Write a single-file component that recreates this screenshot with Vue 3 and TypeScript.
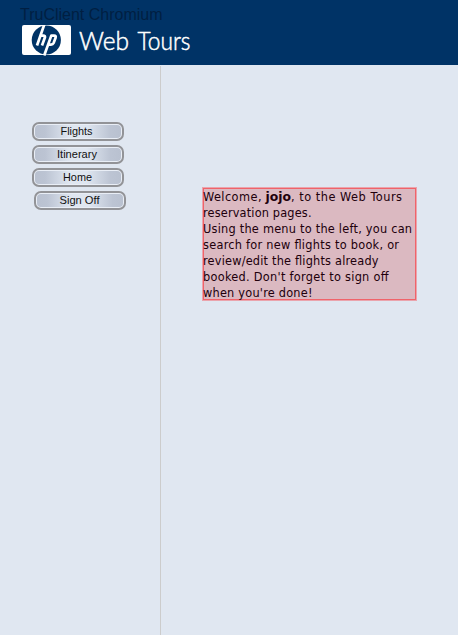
<script setup lang="ts">
interface MenuItem { label: string; x: number; width: number; shifted?: boolean }
interface Line { text: string; width: number }

const menu: MenuItem[] = [
  { label: 'Flights', x: 28.5, width: 32 },
  { label: 'Itinerary', x: 29, width: 40 },
  { label: 'Home', x: 29.5, width: 29 },
  { label: 'Sign Off', x: 29.5, width: 40, shifted: true },
]
const lines: Line[] = [
  { text: 'reservation pages.', width: 108.5 },
  { text: 'Using the menu to the left, you can', width: 209 },
  { text: 'search for new flights to book, or', width: 196 },
  { text: 'review/edit the flights already', width: 175.5 },
  { text: "booked. Don't forget to sign off", width: 185.5 },
  { text: "when you're done!", width: 109.5 },
]
</script>

<template>
  <div class="page">
    <header class="banner">
      <div class="caption">TruClient Chromium</div>
      <svg class="brand" width="174" height="32" viewBox="0 0 174 32">
        <rect x="0" y="0" width="49" height="30" rx="2" fill="#fff" />
        <circle cx="24.3" cy="15" r="14.6" fill="#003366" />
        <g fill="none" stroke="#fff" stroke-width="2.7" stroke-linejoin="round">
          <path d="M22.3 -0.5L15 20.5M18 10.6H21.2Q23.5 10.6 22.8 12.8L20 20.5" />
          <path d="M22.2 30.5L29.3 10.6H32Q34.3 10.6 33.6 12.8L31.6 18Q30.9 19.6 29 19.6H26.6" />
        </g>
        <g class="wordmark">
          <text x="57" y="25" textLength="50" lengthAdjust="spacingAndGlyphs">Web</text>
          <text x="115.5" y="25" textLength="53" lengthAdjust="spacingAndGlyphs">Tours</text>
        </g>
      </svg>
    </header>
    <div class="body">
      <nav class="menu">
        <button v-for="m in menu" :key="m.label" class="item" :class="{ shifted: m.shifted }">
          <span class="face">
            <svg class="label" width="60" height="15">
              <text :x="m.x" y="11" text-anchor="middle" :textLength="m.width" lengthAdjust="spacingAndGlyphs">{{ m.label }}</text>
            </svg>
          </span>
        </button>
      </nav>
      <main class="content">
        <div class="welcome">
          <svg class="line" width="212" height="16">
            <text x="0" y="12" textLength="58.5">Welcome,</text>
            <text class="user" x="62.5" y="12" textLength="25.5" lengthAdjust="spacingAndGlyphs">jojo</text>
            <text x="88" y="12" textLength="111">, to the Web Tours</text>
          </svg>
          <svg v-for="l in lines" :key="l.text" class="line" width="212" height="16">
            <text x="0" y="12" :textLength="l.width">{{ l.text }}</text>
          </svg>
        </div>
      </main>
    </div>
  </div>
</template>

<style>
body { margin: 0; background: #e0e7f1; }
</style>
<style scoped>
.page { height: 635px; display: flex; flex-direction: column; overflow: hidden; background: #e0e7f1; }
.banner { height: 65px; box-sizing: border-box; padding: 5px 0 0 20px; background: #003366; flex: none; }
.caption { height: 20px; font: 16px/20px "Liberation Sans", Arial, sans-serif; color: #001f42; }
.brand { display: block; margin-left: 2px; }
.wordmark { font: 300 25px Lato, sans-serif; fill: #fff; stroke: #fff; stroke-width: .5px; }
.body { flex: 1; display: flex; margin-top: 1px; }
.menu { width: 160px; box-sizing: border-box; padding: 56px 0 0 32px; display: flex; flex-direction: column; gap: 4px; }
.item { width: 92px; height: 19px; box-sizing: border-box; padding: 1px; border: 2px solid #929397; border-radius: 7px; background: #e9eef6; }
.item.shifted { margin-left: 2px; }
.face { display: flex; justify-content: center; align-items: center; height: 13px; border-radius: 4px; background: linear-gradient(90deg, #b9c1d0 0%, #bcc4d3 12%, #dfe6f0 40%, #dfe6f0 60%, #bcc4d3 88%, #b9c1d0 100%); }
.label { display: block; font: 11px "Liberation Sans", Arial, sans-serif; fill: #111; }
.content { flex: 1; border-left: 1px solid #cccccc; padding: 121px 0 0 41px; }
.welcome { width: 215px; height: 114px; box-sizing: border-box; padding-top: 1px; border: 1px solid #eaa4ad; background: #dbb9c1; box-shadow: inset 0 0 0 1px #f0636a; }
.line { display: block; overflow: visible; font: 12.6px "DejaVu Sans Condensed", "DejaVu Sans", Tahoma, sans-serif; font-stretch: condensed; fill: #21000c; }
.user { font-weight: 700; font-size: 13px; }
</style>
